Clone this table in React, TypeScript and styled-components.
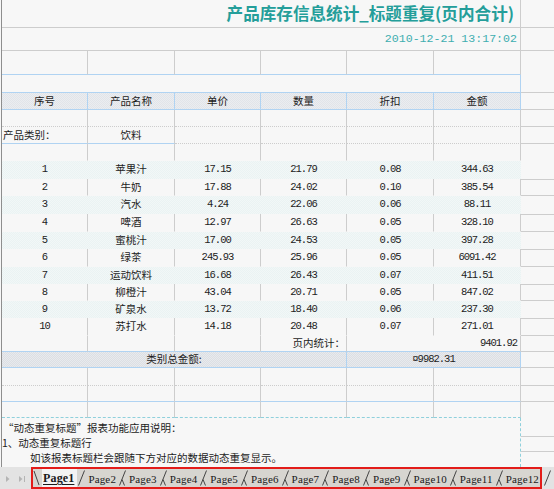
import React from 'react';
import styled, { createGlobalStyle, css } from 'styled-components';

const G = '#cdcdcd';
const B = '#b0d3f2';
const N = 'transparent';
const CY = '#8fd0dc';

const Global = createGlobalStyle`
  *, *::before, *::after { box-sizing: border-box; }
  html, body { margin: 0; padding: 0; background: #f7f7f7; overflow: hidden; }
  body { width: 554px; height: 489px; }
`;

const Page = styled.div`
  width: 554px;
  height: 489px;
  display: flex;
  flex-direction: column;
  background: #f7f7f7;
  font-family: "Noto Sans CJK SC", sans-serif;
  color: #1c1c1c;
`;

const Sheet = styled.div`
  flex: 1;
  display: flex;
  flex-direction: column;
  margin-left: 1px;
  border-left: 1px solid #8e8e8e;
`;

const Row = styled.div<{ $h: number }>`
  display: flex;
  height: ${p => p.$h}px;
`;

const Main = styled.div<{ $bg?: string }>`
  width: 519px;
  display: grid;
  grid-template-columns: 86px 87px 86px 86px 87px 87px;
  ${p => p.$bg && css`background: ${p.$bg};`}
`;

const Edge = styled.div<{ $t?: string; $b?: string }>`
  flex: 1;
  border-top: 1px solid ${p => p.$t ?? N};
  border-bottom: 1px solid ${p => p.$b ?? N};
`;

const Cell = styled.div<{
  $span?: number;
  $r?: string;
  $b?: string;
  $bs?: string;
  $align?: 'left' | 'right' | 'center';
  $mono?: boolean;
  $pad?: number;
}>`
  grid-column: span ${p => p.$span ?? 1};
  border-right: 1px solid ${p => p.$r ?? N};
  border-bottom: 1px ${p => p.$bs ?? 'solid'} ${p => p.$b ?? N};
  display: flex;
  align-items: center;
  justify-content: ${p => (p.$align === 'left' ? 'flex-start' : p.$align === 'right' ? 'flex-end' : 'center')};
  padding: 0 ${p => p.$pad ?? 2}px;
  font-size: 10.5px;
  line-height: 1;
  white-space: nowrap;
  overflow: hidden;
  min-width: 0;
  ${p =>
    p.$mono &&
    css`
      font-family: "Liberation Mono", monospace;
      letter-spacing: -1px;
      font-size: 10.5px;
      color: #222;
    `}
`;

const Title = styled.span`
  font-size: 16.6px;
  font-weight: 700;
  color: #249e9a;
  padding-right: 4px;
`;

const DateText = styled.span`
  font-family: "Liberation Mono", monospace;
  font-size: 11.6px;
  color: #3eaeb0;
  padding-right: 1px;
`;

const headerBg = 'repeating-conic-gradient(#e1e4e9 0% 25%, #ebedf0 0% 50%) 0 0 / 2px 2px';
const tintBg = 'repeating-conic-gradient(#eaf3f3 0% 25%, #f2f7f7 0% 50%) 0 0 / 2px 2px';
const totalBg = 'repeating-conic-gradient(#dcdfe4 0% 25%, #e8eaed 0% 50%) 0 0 / 2px 2px';

const Notes = styled.div`
  display: flex;
  height: 49px;
`;

const NotesText = styled.div`
  width: 519px;
  border-right: 1px dashed ${CY};
  padding-top: 2px;
  font-size: 10.5px;
  line-height: 15px;
  white-space: nowrap;
`;

const NoteLine = styled.div<{ $indent: number }>`
  padding-left: ${p => p.$indent}px;
`;

const NotesEdge = styled.div`
  flex: 1;
  display: grid;
  grid-template-rows: 19px 15px 15px;
`;

const EdgeLine = styled.div`
  border-bottom: 1px solid ${G};
`;

const TabBar = styled.div`
  height: 22px;
  display: flex;
  background: #e3e3e3;
`;

const Nav = styled.div`
  width: 31px;
  display: flex;
  align-items: center;
  gap: 8px;
  padding-left: 5px;
  padding-top: 2px;
`;

const TabBox = styled.div`
  width: 511px;
  border: 2px solid #e31c19;
  display: flex;
  align-items: stretch;
  background: #d7d5d0;
`;

const Tab = styled.span<{ $active?: boolean }>`
  display: flex;
  align-items: center;
  padding: 1px 2px 0;
  font-family: "Liberation Serif", serif;
  font-size: 11px;
  letter-spacing: 0.15px;
  color: #1a1a1a;
  ${p =>
    p.$active &&
    css`
      background: #f3f3f3;
      font-weight: 700;
      font-size: 12px;
      text-decoration: underline;
      text-underline-offset: 2px;
      padding: 1px 3px 0 1px;
    `}
`;

const Tail = styled.div`
  flex: 1;
  display: flex;
  align-items: center;
  padding-left: 1px;
`;

const Sep: React.FC<{ back?: boolean; plain?: boolean }> = ({ back, plain }) => (
  <svg width="9" height="18" viewBox="0 0 9 18" style={{ alignSelf: 'center', flex: 'none' }}>
    {back ? (
      <path d="M1 2 L6 16" stroke="#444" strokeWidth="1" fill="none" />
    ) : (
      <>
        <path d="M1.5 16.5 L7.5 1.5" stroke="#444" strokeWidth="1" fill="none" />
        {!plain && <path d="M4 10.5 L6.5 16.5" stroke="#444" strokeWidth="1" fill="none" />}
      </>
    )}
  </svg>
);

const Arrow: React.FC<{ bar?: boolean }> = ({ bar }) => (
  <svg width={bar ? 8 : 5} height="8" viewBox={bar ? '0 0 8 8' : '0 0 5 8'}>
    <path d="M1 1 L4.5 4 L1 7 Z" fill="#b4b4b4" />
    {bar && <rect x="6" y="1" width="1" height="6" fill="#b4b4b4" />}
  </svg>
);

const items: [string, string, string, string, string, string][] = [
  ['1', '苹果汁', '17.15', '21.79', '0.08', '344.63'],
  ['2', '牛奶', '17.88', '24.02', '0.10', '385.54'],
  ['3', '汽水', '4.24', '22.06', '0.06', '88.11'],
  ['4', '啤酒', '12.97', '26.63', '0.05', '328.10'],
  ['5', '蜜桃汁', '17.00', '24.53', '0.05', '397.28'],
  ['6', '绿茶', '245.93', '25.96', '0.05', '6091.42'],
  ['7', '运动饮料', '16.68', '26.43', '0.07', '411.51'],
  ['8', '柳橙汁', '43.04', '20.71', '0.05', '847.02'],
  ['9', '矿泉水', '13.72', '18.40', '0.06', '237.30'],
  ['10', '苏打水', '14.18', '20.48', '0.07', '271.01'],
];
const heights = [18, 17, 18, 18, 17, 18, 17, 17, 17, 18];
const headers = ['序号', '产品名称', '单价', '数量', '折扣', '金额'];
const pages = ['Page1', 'Page2', 'Page3', 'Page4', 'Page5', 'Page6', 'Page7', 'Page8', 'Page9', 'Page10', 'Page11', 'Page12'];

const Blank: React.FC<{ b?: string; bs?: string; r?: string }> = ({ b = G, bs, r = G }) => (
  <>
    {[0, 1, 2, 3, 4, 5].map(i => (
      <Cell key={i} $r={r} $b={b} $bs={bs} />
    ))}
  </>
);

export default function App() {
  return (
    <Page>
      <Global />
      <Sheet>
        <Row $h={28}>
          <Main>
            <Cell $span={6} $r={G} $b={G} $align="right">
              <Title>产品库存信息统计_标题重复(页内合计)</Title>
            </Cell>
          </Main>
          <Edge $b={G} />
        </Row>
        <Row $h={23}>
          <Main>
            <Cell $span={6} $r={G} $b={G} $align="right">
              <DateText>2010-12-21 13:17:02</DateText>
            </Cell>
          </Main>
          <Edge $b={G} />
        </Row>
        <Row $h={24}>
          <Main>
            <Blank b={B} />
          </Main>
          <Edge />
        </Row>
        <Row $h={18}>
          <Main>
            <Cell $span={6} $r={B} $b={B} />
          </Main>
          <Edge $b={G} />
        </Row>
        <Row $h={17}>
          <Main $bg={headerBg}>
            {headers.map(h => (
              <Cell key={h} $r={B} $b={B}>
                {h}
              </Cell>
            ))}
          </Main>
          <Edge $b={G} />
        </Row>
        <Row $h={17}>
          <Main>
            <Blank b={G} bs="dotted" />
          </Main>
          <Edge $b={G} />
        </Row>
        <Row $h={17}>
          <Main>
            <Cell $r={G} $b={B} $align="left" $pad={1}>
              产品类别：
            </Cell>
            <Cell $r={G} $b={B}>
              饮料
            </Cell>
            <Cell $r={G} $b={G} $bs="dotted" />
            <Cell $r={G} $b={G} $bs="dotted" />
            <Cell $r={G} $b={G} $bs="dotted" />
            <Cell $r={G} $b={G} $bs="dotted" />
          </Main>
          <Edge $b={G} />
        </Row>
        <Row $h={17}>
          <Main>
            <Blank b={N} />
          </Main>
          <Edge />
        </Row>
        {items.map((it, i) => {
          const tinted = i % 2 === 0;
          return (
            <Row key={it[0]} $h={heights[i]}>
              <Main $bg={tinted ? tintBg : undefined}>
                <Cell $mono $r={tinted ? N : G}>{it[0]}</Cell>
                <Cell $r={tinted ? N : G}>{it[1]}</Cell>
                <Cell $mono $r={tinted ? N : G}>{it[2]}</Cell>
                <Cell $mono $r={tinted ? N : G}>{it[3]}</Cell>
                <Cell $mono $r={tinted ? N : G}>{it[4]}</Cell>
                <Cell $mono $r={tinted ? N : G}>{it[5]}</Cell>
              </Main>
              {tinted ? <Edge /> : <Edge $t={G} $b={G} />}
            </Row>
          );
        })}
        <Row $h={16}>
          <Main>
            <Cell $r={G} $b={B} />
            <Cell $r={G} $b={B} />
            <Cell $r={G} $b={B} />
            <Cell $r={G} $b={B} $align="right" $pad={1}>
              页内统计：
            </Cell>
            <Cell $span={2} $r={G} $b={B} $align="right" $mono $pad={3}>
              9401.92
            </Cell>
          </Main>
          <Edge $b={G} />
        </Row>
        <Row $h={16}>
          <Main $bg={totalBg}>
            <Cell $span={4} $r={B} $b={B}>
              类别总金额:
            </Cell>
            <Cell $span={2} $r={B} $b={B} $mono>
              ¤9982.31
            </Cell>
          </Main>
          <Edge $b={G} />
        </Row>
        <Row $h={18}>
          <Main>
            <Blank b={G} bs="dotted" />
          </Main>
          <Edge $b={G} />
        </Row>
        <Row $h={16}>
          <Main>
            <Blank b={B} />
          </Main>
          <Edge $b={G} />
        </Row>
        <Row $h={16}>
          <Main>
            <Blank b={CY} bs="dashed" />
          </Main>
          <Edge />
        </Row>
        <Notes>
          <NotesText>
            <NoteLine $indent={1}>“动态重复标题”报表功能应用说明：</NoteLine>
            <NoteLine $indent={0}>1、动态重复标题行</NoteLine>
            <NoteLine $indent={28}>如该报表标题栏会跟随下方对应的数据动态重复显示。</NoteLine>
          </NotesText>
          <NotesEdge>
            <EdgeLine />
            <EdgeLine />
            <div />
          </NotesEdge>
        </Notes>
      </Sheet>
      <TabBar>
        <Nav>
          <Arrow />
          <Arrow bar />
        </Nav>
        <TabBox>
          <Sep back />
          {pages.map((p, i) => (
            <React.Fragment key={p}>
              <Tab $active={i === 0}>{p}</Tab>
              {i < pages.length - 1 && <Sep plain={i === 0} />}
            </React.Fragment>
          ))}
        </TabBox>
        <Tail>
          <Sep plain />
        </Tail>
      </TabBar>
    </Page>
  );
}
